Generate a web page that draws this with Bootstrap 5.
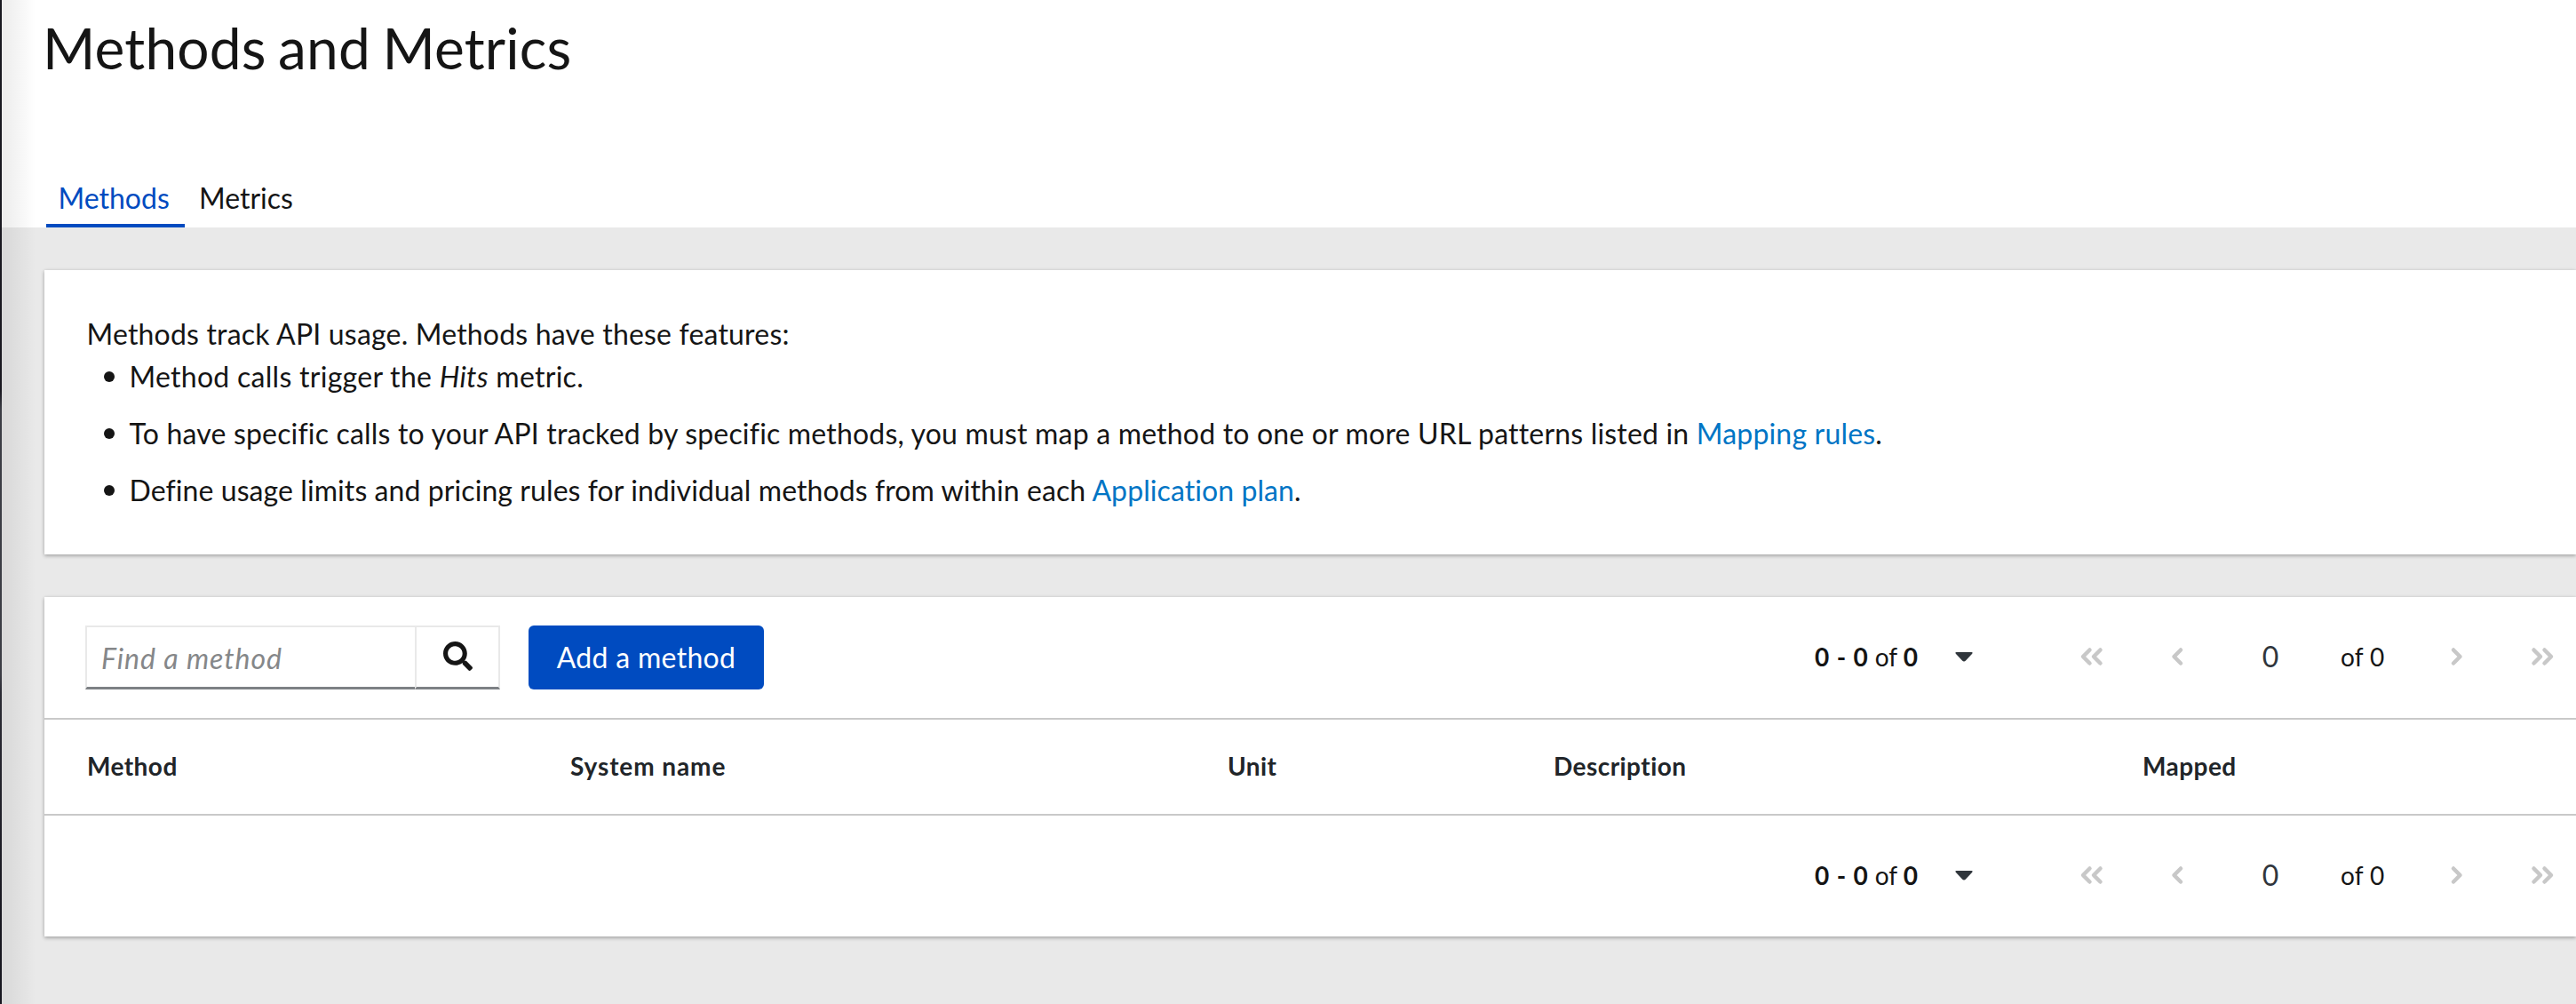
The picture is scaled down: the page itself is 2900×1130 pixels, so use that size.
<!DOCTYPE html>
<html lang="en">
<head>
<meta charset="utf-8">
<title>Methods and Metrics</title>
<link rel="stylesheet" href="https://cdn.jsdelivr.net/npm/bootstrap@5.3.0/dist/css/bootstrap.min.css">
<style>
body{font-family:Lato,"Open Sans",sans-serif;font-size:32px;line-height:48px;color:#151515;background:#e9e9e9;height:1130px;overflow:hidden}
a{color:#0075c5}
.edge{width:2px;background:linear-gradient(#191820 0 440px,#3b3c44 460px 760px,#2a2a33 780px,#17161f 1040px)}
.edge-shade{left:2px;top:0;width:38px;height:1130px;background:linear-gradient(90deg,rgba(10,0,0,.075),rgba(0,0,0,.05) 35%,rgba(0,0,0,0))}
.page-body{min-width:0}
.page-head{height:256px;padding-left:48px}
.page-head h1{font-size:64px;line-height:84px;font-weight:400;letter-spacing:.15px;word-spacing:-3px;padding-top:12px;margin:0 0 0 -2px;height:190px}
.page-tabs{height:66px;padding-left:2px}
.page-tabs .nav-link{padding:9px 0 0 13.5px;height:66px;color:#151515;width:156px;white-space:nowrap}
.page-tabs .nav-link.active{color:#004bc0;border-bottom:4px solid #004bc0}
.page-tabs .nav-link+.nav-link{padding-left:16px}
.panel{margin-left:48px;border:0;border-radius:0;background:#fff;color:inherit;box-shadow:0 2px 4px rgba(3,3,3,.24),0 0 4px rgba(3,3,3,.1)}
.intro{height:320px;margin-top:48px;padding:48px 0 0 47.5px}
.intro p{letter-spacing:.19px}
.intro ul{padding-left:48px;list-style:none}
.intro li{margin-bottom:16px;position:relative}
.intro li::before{content:"";position:absolute;left:-29px;top:18px;width:12px;height:12px;border-radius:50%;background:#151515}
.sp-a{letter-spacing:.28px}.sp-b{letter-spacing:.185px}.sp-c{letter-spacing:.08px}
.listing{margin-top:48px;height:382px}
.tools{height:138px;padding:32px 0 0 46px;border-bottom:2px solid #c9c9c9}
.finder{width:467px;height:72px}
.finder .form-control,.finder .btn{border:2px solid #e9e9e9;border-bottom:3px solid #7d8185;border-radius:0;color:#151515;background:#fff}
.finder .form-control{font-size:32px;line-height:48px;padding:2px 16px 0;font-style:italic;letter-spacing:.95px}
.finder .form-control::placeholder{color:#858789}
.finder .btn{width:96px;padding:0;display:flex;align-items:center;justify-content:center;margin-left:-2px!important}
.finder .btn svg{margin-top:-2px}
.add{width:265px;height:72px;margin-left:32px;border-radius:6px;background:#004bc0;border:0;color:#fff;font-size:32px;padding:0;letter-spacing:.3px}
.pager{width:857px;height:70px;font-size:28px}
.pager>*{flex-shrink:0}
.pager b{font-weight:700;letter-spacing:.8px}
.count{width:158px}
.caret{width:106px}
.step{width:96px;color:#c8c8c8}
.num{width:114px;font-size:32px;color:#30363c;text-align:center}
.total{width:105px;padding-left:22px;letter-spacing:.3px}
.heads{height:108px;border-bottom:2px solid #c9c9c9;font-size:28px}
.heads th{font-weight:700;border:0;padding:28px 0 30px;height:106px;background:transparent;color:inherit;letter-spacing:.45px}
.heads th.wide{letter-spacing:.9px}
.heads table{table-layout:fixed;margin:0;width:2850px}
.foot{padding-top:32px}
</style>
</head>
<body>
<div class="d-flex h-100">
<div class="edge flex-shrink-0"></div>
<main class="flex-grow-1 page-body">
<header class="page-head bg-white">
<h1>Methods and Metrics</h1>
<nav class="nav page-tabs"><a class="nav-link active" href="#">Methods</a><a class="nav-link" href="#">Metrics</a></nav>
</header>
<section class="card panel intro">
<p class="mb-0">Methods track API usage. Methods have these features:</p>
<ul class="mb-0">
<li class="sp-a">Method calls trigger the <i>Hits</i> metric.</li>
<li class="sp-b">To have specific calls to your API tracked by specific methods, you must map a method to one or more URL patterns listed in <a class="text-decoration-none" href="#">Mapping rules</a>.</li>
<li class="sp-c">Define usage limits and pricing rules for individual methods from within each <a class="text-decoration-none" href="#">Application plan</a>.</li>
</ul>
</section>
<section class="card panel listing">
<div class="tools d-flex">
<div class="input-group flex-nowrap finder"><input class="form-control" type="text" placeholder="Find a method" aria-label="Find a method"><button class="btn" type="button" aria-label="Search"><svg width="33" height="33" viewBox="0 0 512 512" fill="currentColor"><path d="M505 442.700L405.300 343c-4.500-4.500-10.600-7-17-7H372c27.600-35.300 44-79.700 44-128C416 93.100 322.900 0 208 0S0 93.100 0 208s93.100 208 208 208c48.300 0 92.700-16.400 128-44v16.300c0 6.400 2.500 12.500 7 17l99.700 99.700c9.400 9.400 24.600 9.400 33.900 0l28.300-28.300c9.400-9.400 9.400-24.600.1-34zM208 336c-70.700 0-128-57.200-128-128 0-70.700 57.200-128 128-128 70.700 0 128 57.200 128 128 0 70.700-57.200 128-128 128z"/></svg></button></div>
<button class="btn add" type="button">Add a method</button>
<div class="pager d-flex align-items-center ms-auto">
<div class="count"><b>0 - 0</b> of <b>0</b></div>
<svg class="caret" height="11" viewBox="0 0 106 11"><path d="M1.500 0H18.500Q20.500 0 19 2L12 9.500Q10 11.500 8 9.500L1 2Q-.5 0 1.500 0Z" fill="#30363c"/></svg>
<svg class="step" height="22" viewBox="0 0 96 22" fill="none" stroke="currentColor" stroke-width="4.500" stroke-linecap="round" stroke-linejoin="round"><path d="M45.500 3.500l-7.500 7.500 7.500 7.500M57.500 3.500l-7.500 7.500 7.500 7.500"/></svg>
<svg class="step" height="22" viewBox="0 0 96 22" fill="none" stroke="currentColor" stroke-width="4.500" stroke-linecap="round" stroke-linejoin="round"><path d="M52 3.500l-7.500 7.500 7.500 7.500"/></svg>
<div class="num">0</div><div class="total">of 0</div>
<svg class="step" height="22" viewBox="0 0 96 22" fill="none" stroke="currentColor" stroke-width="4.500" stroke-linecap="round" stroke-linejoin="round"><path d="M44 3.500l7.500 7.500-7.500 7.500"/></svg>
<svg class="step" height="22" viewBox="0 0 96 22" fill="none" stroke="currentColor" stroke-width="4.500" stroke-linecap="round" stroke-linejoin="round"><path d="M38.500 3.500l7.500 7.500-7.500 7.500M50.500 3.500l7.500 7.500-7.500 7.500"/></svg>
</div>
</div>
<div class="heads">
<table class="table table-borderless">
<colgroup><col style="width:592px"><col style="width:740px"><col style="width:367px"><col style="width:663px"><col></colgroup>
<thead><tr><th style="padding-left:48px">Method</th><th class="wide">System name</th><th>Unit</th><th>Description</th><th>Mapped</th></tr></thead>
</table>
</div>
<div class="foot d-flex">
<div class="pager d-flex align-items-center ms-auto">
<div class="count"><b>0 - 0</b> of <b>0</b></div>
<svg class="caret" height="11" viewBox="0 0 106 11"><path d="M1.500 0H18.500Q20.500 0 19 2L12 9.500Q10 11.500 8 9.500L1 2Q-.5 0 1.500 0Z" fill="#30363c"/></svg>
<svg class="step" height="22" viewBox="0 0 96 22" fill="none" stroke="currentColor" stroke-width="4.500" stroke-linecap="round" stroke-linejoin="round"><path d="M45.500 3.500l-7.500 7.500 7.500 7.500M57.500 3.500l-7.500 7.500 7.500 7.500"/></svg>
<svg class="step" height="22" viewBox="0 0 96 22" fill="none" stroke="currentColor" stroke-width="4.500" stroke-linecap="round" stroke-linejoin="round"><path d="M52 3.500l-7.500 7.500 7.500 7.500"/></svg>
<div class="num">0</div><div class="total">of 0</div>
<svg class="step" height="22" viewBox="0 0 96 22" fill="none" stroke="currentColor" stroke-width="4.500" stroke-linecap="round" stroke-linejoin="round"><path d="M44 3.500l7.500 7.500-7.500 7.500"/></svg>
<svg class="step" height="22" viewBox="0 0 96 22" fill="none" stroke="currentColor" stroke-width="4.500" stroke-linecap="round" stroke-linejoin="round"><path d="M38.500 3.500l7.500 7.500-7.500 7.500M50.500 3.500l7.500 7.500-7.500 7.500"/></svg>
</div>
</div>
</section>
</main>
</div>
<div class="edge-shade position-absolute"></div>
<script src="https://cdn.jsdelivr.net/npm/bootstrap@5.3.0/dist/js/bootstrap.bundle.min.js"></script>
</body>
</html>
